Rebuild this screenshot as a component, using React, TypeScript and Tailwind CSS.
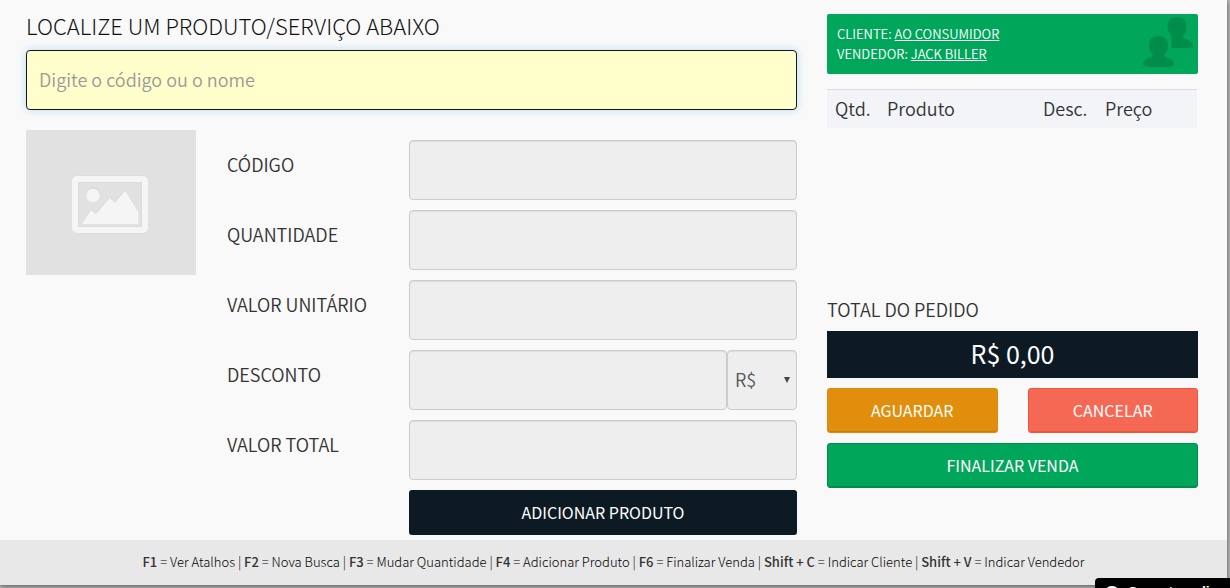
import type { ReactNode } from "react";

const field =
  "h-[60px] min-w-0 rounded-[4px] border border-[#ccc] bg-[#eee] px-3 text-[18px] text-[#555] shadow-[inset_0_1px_1px_rgba(0,0,0,0.075)] outline-none";
const label = "w-[182px] shrink-0 pt-[10px] text-[18px] leading-7 font-[350] text-[#333]";

const shortcuts: [string, string][] = [
  ["F1", "Ver Atalhos"],
  ["F2", "Nova Busca"],
  ["F3", "Mudar Quantidade"],
  ["F4", "Adicionar Produto"],
  ["F6", "Finalizar Venda"],
  ["Shift + C", "Indicar Cliente"],
  ["Shift + V", "Indicar Vendedor"],
];

function Row({ id, text, children }: { id: string; text: string; children?: ReactNode }) {
  return (
    <div className="flex">
      <label htmlFor={id} className={label}>
        {text}
      </label>
      {children ?? <input id={id} readOnly className={field + " flex-1"} />}
    </div>
  );
}

function Placeholder() {
  return (
    <div className="flex h-[145px] w-[170px] shrink-0 items-center justify-center bg-[#e1e1e1]">
      <svg width="80" height="62" viewBox="0 0 80 62" className="mt-1 mr-[2px]" role="img" aria-label="Sem imagem">
        <rect x="2" y="1" width="76" height="59" rx="5" fill="#dcdcdc" />
        <rect x="2" y="2" width="76" height="57" rx="5" fill="#f5f5f5" />
        <rect x="8" y="8" width="64" height="45" fill="#dcdcdc" />
        <rect x="9" y="9" width="62" height="43" fill="#e1e1e1" />
        <circle cx="23" cy="20.5" r="7.5" fill="#dcdcdc" />
        <circle cx="23" cy="21.5" r="6.800" fill="#f5f5f5" />
        <path d="M12 50 21 35l5 4L40 23l5 5L55 15l14 23v12Z" fill="#dcdcdc" />
        <path d="M12 50 21 36l5 4L40 24l5 5L55 16.500l13.500 21.500v12Z" fill="#f5f5f5" />
      </svg>
    </div>
  );
}

function People() {
  return (
    <svg width="50" height="50" viewBox="0 0 50 50" fill="#008d4c" aria-hidden="true" className="shrink-0">
      <path d="M34 0c6 0 9.500 3.500 9.500 10 0 4-1.500 7-3.500 9v2c2 1.500 9.500 2 10 8 0 1.500-3 2-8 2H28.500V22l-.8-1c1.800-.2 1.300-1.500.3-3-2-2-3.500-5-3.500-8C24.500 3.500 28.500 0 34 0Z" />
      <path d="M15.500 19c6 0 9.500 3.500 9.500 9.500 0 4-1.500 7-3.500 9v2c2 1.500 9.500 2 9.500 8 0 2-7 2.500-15.500 2.500S0 49.500 0 47.500c0-6 7.500-6.500 9.500-8v-2c-2-2-3.500-5-3.500-9C6 22.500 9.500 19 15.500 19Z" />
    </svg>
  );
}

export default function App() {
  return (
    <div className="min-h-screen overflow-hidden bg-[#bbb] pr-[3px] font-['Noto_Sans_CJK_SC','Noto_Sans',sans-serif] text-[#333]">
      <div className="bg-[#f9f9f9] shadow-[0_1px_5px_rgba(0,0,0,0.6)]">
        <div className="flex gap-[30px] pr-[29px] pb-[5px] pl-[26px]">
          <main className="min-w-0 flex-1 pt-[10px]">
            <label htmlFor="busca" className="mb-[10px] block text-[22px] leading-[30px] font-light text-[#111]">
              LOCALIZE UM PRODUTO/SERVIÇO ABAIXO
            </label>
            <input
              id="busca"
              placeholder="Digite o código ou o nome"
              className="block h-[60px] w-full rounded-[4px] border border-[#0d1a26] bg-[#ffffcc] px-3 pb-[2px] text-[18px] font-[350] shadow-[0_0_8px_rgba(102,175,233,0.4)] outline-none placeholder:text-[#999]"
            />
            <div className="mt-5 flex gap-[31px]">
              <Placeholder />
              <form className="flex flex-1 flex-col gap-[10px] pt-[10px]">
                <Row id="codigo" text="CÓDIGO" />
                <Row id="quantidade" text="QUANTIDADE" />
                <Row id="unitario" text="VALOR UNITÁRIO" />
                <Row id="desconto" text="DESCONTO">
                  <input id="desconto" readOnly className={field + " flex-1"} />
                  <div className="relative w-[70px]">
                    <select
                      aria-label="Tipo de desconto"
                      className="h-[60px] w-full appearance-none rounded-[4px] border border-[#ccc] bg-[#eee] pb-[2px] pl-[7px] text-[18px] font-[350] text-[#555] shadow-[inset_0_1px_1px_rgba(0,0,0,0.075)]"
                    >
                      <option>R$</option>
                      <option>%</option>
                    </select>
                    <svg className="pointer-events-none absolute top-[27px] right-[7px]" width="6" height="6" aria-hidden="true">
                      <path d="M0 0h6L3 6Z" fill="#444" />
                    </svg>
                  </div>
                </Row>
                <Row id="total" text="VALOR TOTAL" />
                <button type="button" className="ml-[182px] h-[45px] rounded-[3px] bg-[#0d1a24] pb-[2px] text-[16px] text-white">
                  ADICIONAR PRODUTO
                </button>
              </form>
            </div>
          </main>

          <aside className="w-[371px] shrink-0 pt-[14px]">
            <div className="flex h-[60px] justify-between rounded-[2px] bg-[#00a65a] pt-[3px] pr-[5px] pl-[10px] text-white">
              <div className="pt-[7px] text-[13px] leading-5 font-[350]">
                <p>
                  CLIENTE: <a href="#cliente" className="underline">AO CONSUMIDOR</a>
                </p>
                <p>
                  VENDEDOR: <a href="#vendedor" className="underline">JACK BILLER</a>
                </p>
              </div>
              <People />
            </div>
            <div className="mt-[15px] h-[205px] pr-px">
              <table className="w-full table-fixed border-t border-[#ddd] bg-[#f2f4f7] text-left text-[18px]">
                <thead>
                  <tr className="h-[38px] leading-7">
                    <th className="w-[52px] pb-[2px] pl-2 font-[350]">Qtd.</th>
                    <th className="pb-[2px] pl-2 font-[350]">Produto</th>
                    <th className="w-[62px] pb-[2px] pl-2 font-[350]">Desc.</th>
                    <th className="w-[100px] pb-[2px] pl-2 font-[350]">Preço</th>
                  </tr>
                </thead>
              </table>
            </div>
            <h2 className="mb-[6px] text-[18px] leading-[31px] font-[350]">TOTAL DO PEDIDO</h2>
            <output className="block bg-[#0d1a24] pb-[2px] text-center text-[25px] leading-[45px] text-white">R$ 0,00</output>
            <div className="mt-[10px] grid grid-cols-2 gap-x-[30px] gap-y-[10px] text-[16px] text-white">
              <button type="button" className="h-[45px] rounded-[3px] border border-[#da8c10] bg-[#e08e0b] pb-[2px] shadow-[inset_0_-1px_0_#c87f0a]">
                AGUARDAR
              </button>
              <button type="button" className="h-[45px] rounded-[3px] border border-[#f4543c] bg-[#f56954] pb-[2px] shadow-[inset_0_-1px_0_#e9573f]">
                CANCELAR
              </button>
              <button type="button" className="col-span-2 h-[45px] rounded-[3px] border border-[#008d4c] bg-[#00a65a] pb-[2px] shadow-[inset_0_-1px_0_#008d4c]">
                FINALIZAR VENDA
              </button>
            </div>
          </aside>
        </div>
        <footer className="bg-[#e8e8e8] pb-[2px] text-center text-[13px] leading-[43px] font-light text-black">
          {shortcuts.map(([key, action], i) => (
            <span key={key}>
              {i > 0 && " | "}
              <b className="font-medium text-[#333]">{key}</b> = {action}
            </span>
          ))}
        </footer>
      </div>
      <button
        type="button"
        className="fixed right-0 -bottom-[22px] flex h-8 w-[135px] items-start gap-2 overflow-hidden rounded-tl-[4px] bg-black pt-[6px] pl-[9px] font-['Liberation_Sans',sans-serif] text-[14px] leading-4 font-bold whitespace-nowrap text-white"
      >
        <span className="mt-[2px] size-4 shrink-0 rounded-full bg-white" />
        Suporte online
      </button>
    </div>
  );
}
